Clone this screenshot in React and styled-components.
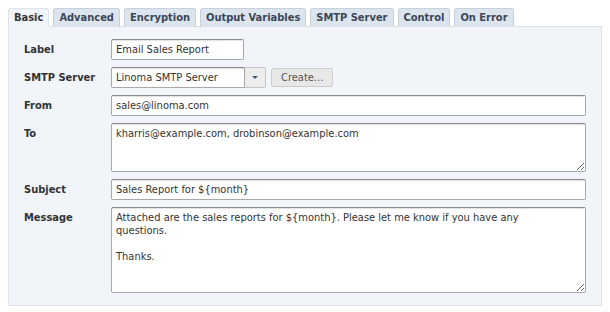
import React from 'react'
import styled, { createGlobalStyle } from 'styled-components'

const font = `"DejaVu Sans Condensed", "DejaVu Sans", Verdana, sans-serif`

const Global = createGlobalStyle`
  body {
    margin: 8px;
    background: #fff;
    font-family: ${font};
    font-size: 11px;
    color: #333;
  }
`

const Wrapper = styled.div`
  width: 594px;
`

const TabBar = styled.div`
  display: flex;
  gap: 4px;
  height: 19px;
  position: relative;
  z-index: 1;
`

const Tab = styled.div`
  height: 19px;
  box-sizing: border-box;
  padding: 0 5px;
  display: flex;
  align-items: center;
  font-weight: bold;
  font-size: 11px;
  color: ${props => props.active ? '#333' : '#3b4656'};
  background: ${props => props.active ? '#f1f4f9' : '#dce4ee'};
  border: 1px solid ${props => props.active ? '#dde3ea' : '#c7d1dd'};
  border-bottom: ${props => props.active ? '1px solid #f1f4f9' : '1px solid #dde3ea'};
  border-radius: 3px 3px 0 0;
`

const Panel = styled.div`
  margin-top: -1px;
  background: #f1f4f9;
  border: 1px solid #dde3ea;
  padding: 12px 15px 12px 15px;
  display: grid;
  grid-template-columns: 87px 1fr;
  row-gap: 7px;
  align-items: start;
`

const Label = styled.div`
  font-weight: bold;
  font-size: 11px;
  color: #333;
  padding-top: 4px;
  line-height: 14px;
`

const field = `
  box-sizing: border-box;
  border: 1px solid #a9a9a9;
  border-top-color: #8c8c8c;
  border-radius: 2px;
  background: #fff;
  box-shadow: inset 0 1px 1px rgba(0, 0, 0, 0.12);
  font-family: ${font};
  font-size: 11px;
  color: #333;
  padding: 0 4px;
  margin: 0;
  outline: none;
`

const Input = styled.input`
  ${field}
  height: 21px;
  width: ${props => props.width || '100%'};
`

const TextArea = styled.textarea`
  ${field}
  display: block;
  width: 100%;
  height: ${props => props.height}px;
  padding: 3px 18px 3px 4px;
  line-height: 13px;
  resize: both;
`

const Line = styled.div`
  display: flex;
  align-items: center;
  gap: 5px;
`

const Select = styled.div`
  display: flex;
  height: 21px;
`

const SelectValue = styled.div`
  ${field}
  width: 134px;
  height: 21px;
  display: flex;
  align-items: center;
  border-radius: 2px 0 0 2px;
`

const Arrow = styled.div`
  width: 21px;
  height: 21px;
  box-sizing: border-box;
  border: 1px solid #c4c4c4;
  border-left: none;
  background: #ececec;
  display: flex;
  align-items: center;
  justify-content: center;
  border-radius: 0 2px 2px 0;

  &::after {
    content: '';
    border-left: 3px solid transparent;
    border-right: 3px solid transparent;
    border-top: 3px solid #3e5877;
  }
`

const Button = styled.div`
  height: 19px;
  box-sizing: border-box;
  padding: 0 9px;
  border: 1px solid #cfcfcf;
  background: #e8e8e8;
  color: #555;
  font-size: 11px;
  display: flex;
  align-items: center;
  border-radius: 2px;
`

const tabs = ['Basic', 'Advanced', 'Encryption', 'Output Variables', 'SMTP Server', 'Control', 'On Error']

const App = () => {
  return (
    <Wrapper>
      <Global />
      <TabBar>
        {tabs.map((t, i) => <Tab key={t} active={i === 0}>{t}</Tab>)}
      </TabBar>
      <Panel>
        <Label>Label</Label>
        <div><Input width="133px" defaultValue="Email Sales Report" /></div>

        <Label>SMTP Server</Label>
        <Line>
          <Select>
            <SelectValue>Linoma SMTP Server</SelectValue>
            <Arrow />
          </Select>
          <Button>Create...</Button>
        </Line>

        <Label>From</Label>
        <Input defaultValue="sales@linoma.com" />

        <Label>To</Label>
        <TextArea height={49} defaultValue="kharris@example.com, drobinson@example.com" />

        <Label>Subject</Label>
        <Input defaultValue="Sales Report for ${month}" />

        <Label>Message</Label>
        <TextArea
          height={86}
          defaultValue={'Attached are the sales reports for ${month}. Please let me know if you have any questions.\n\nThanks.'}
        />
      </Panel>
    </Wrapper>
  )
}

export default App
